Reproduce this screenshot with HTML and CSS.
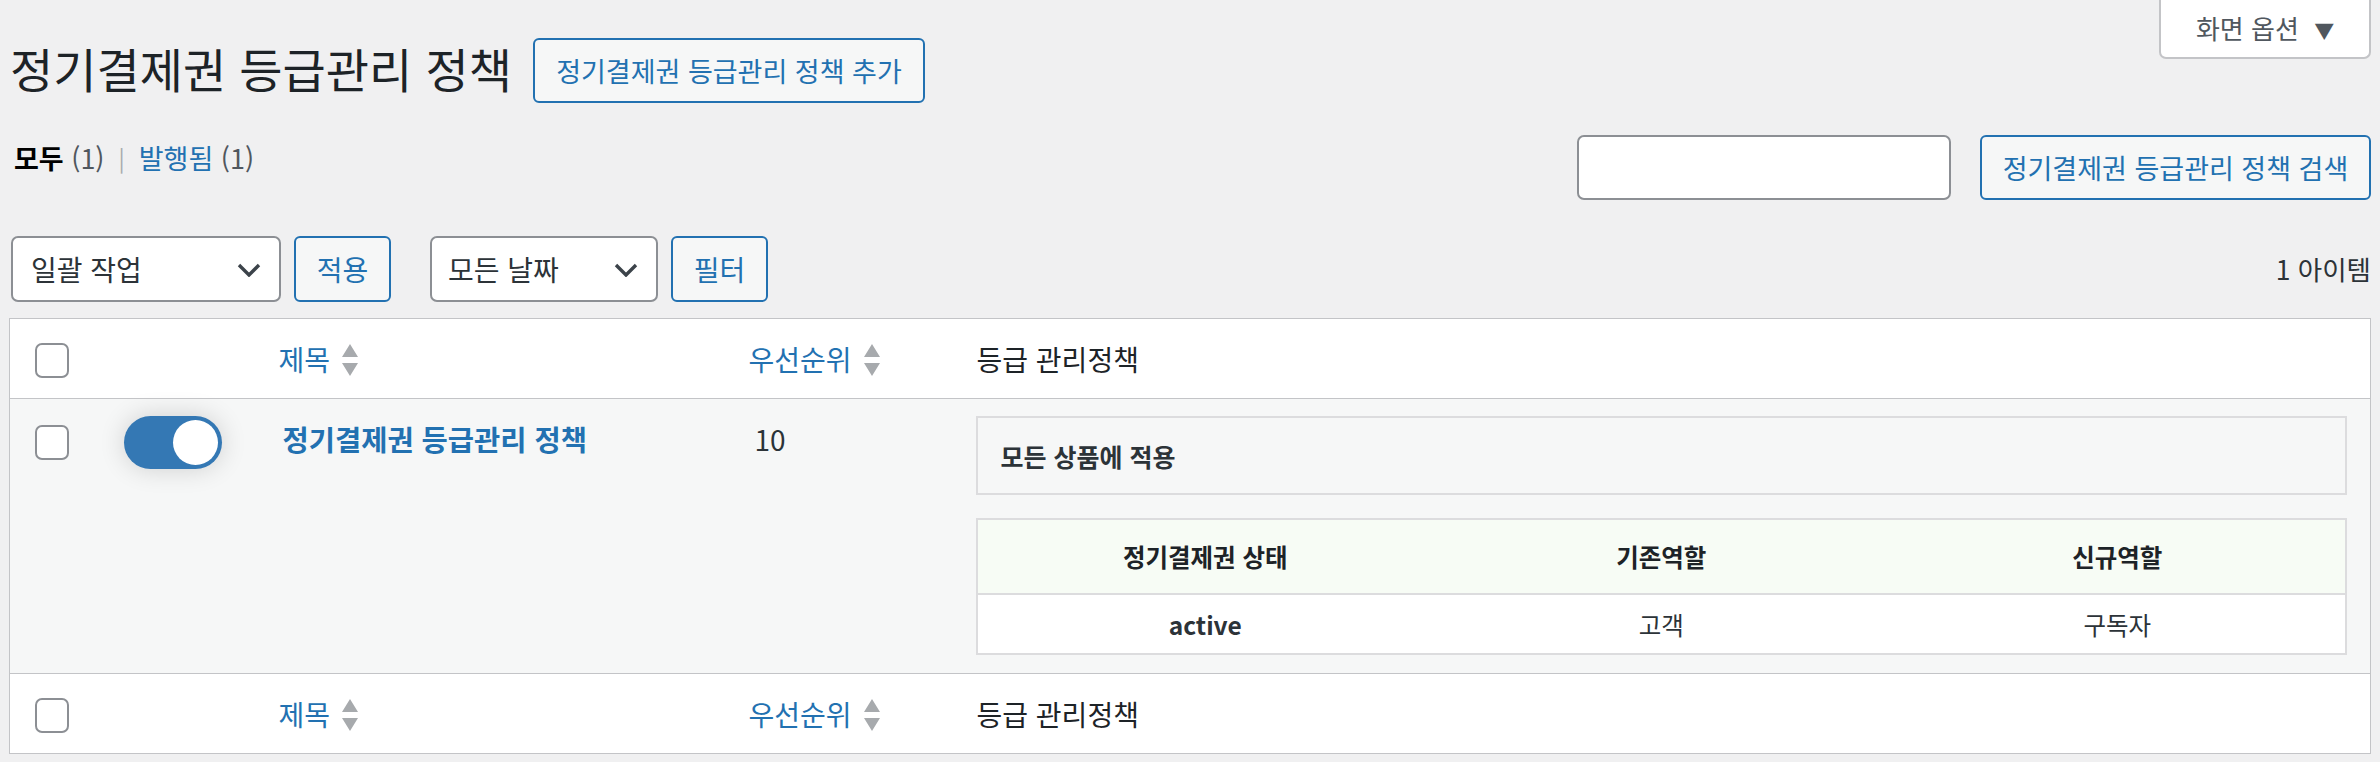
FILE: index.html
```html
<!DOCTYPE html>
<html lang="ko">
<head>
<meta charset="utf-8">
<title>정기결제권 등급관리 정책</title>
<link rel="stylesheet" href="styles.css">
</head>
<body>
<div class="wrap">
  <div class="top">
    <div class="heading">
      <h1 class="page-title">정기결제권 등급관리 정책</h1>
      <a class="btn btn-title" href="#">정기결제권 등급관리 정책 추가</a>
    </div>
    <button class="screen-options">화면 옵션 <span class="tri">▼</span></button>
  </div>

  <div class="filters-row">
    <ul class="subsubsub">
      <li class="current">모두 <span class="count">(1)</span></li>
      <li class="sep">|</li>
      <li><a href="#">발행됨</a> <span class="count">(1)</span></li>
    </ul>
    <div class="search-box">
      <input class="search-input" type="search" aria-label="검색">
      <a class="btn btn-search" href="#">정기결제권 등급관리 정책 검색</a>
    </div>
  </div>

  <div class="tablenav">
    <div class="actions">
      <div class="select select-bulk"><span>일괄 작업</span>
        <svg class="chev" viewBox="0 0 24 14" width="24" height="14"><path d="M2 2 L12 12 L22 2" fill="none" stroke="#3c434a" stroke-width="3.4"/></svg>
      </div>
      <a class="btn btn-small" href="#">적용</a>
      <div class="select select-date"><span>모든 날짜</span>
        <svg class="chev" viewBox="0 0 24 14" width="24" height="14"><path d="M2 2 L12 12 L22 2" fill="none" stroke="#3c434a" stroke-width="3.4"/></svg>
      </div>
      <a class="btn btn-small" href="#">필터</a>
    </div>
    <div class="items">1 아이템</div>
  </div>

  <table class="list">
    <colgroup>
      <col class="c-check"><col class="c-toggle"><col class="c-title"><col class="c-prio"><col>
    </colgroup>
    <thead>
      <tr class="head-row">
        <td class="cell-check"><span class="cb"></span></td>
        <td></td>
        <th class="cell-title"><a class="sort" href="#">제목<svg class="sort-ind" viewBox="0 0 18 34" width="18" height="34"><path d="M9 1 L17 14 L1 14 Z M1 20 L17 20 L9 33 Z" fill="#a7aaad"/></svg></a></th>
        <th class="cell-prio"><a class="sort" href="#">우선순위<svg class="sort-ind" viewBox="0 0 18 34" width="18" height="34"><path d="M9 1 L17 14 L1 14 Z M1 20 L17 20 L9 33 Z" fill="#a7aaad"/></svg></a></th>
        <th class="cell-grade">등급 관리정책</th>
      </tr>
    </thead>
    <tbody>
      <tr class="body-row">
        <td class="cell-check"><span class="cb"></span></td>
        <td class="cell-toggle"><span class="toggle"><span class="knob"></span></span></td>
        <td class="cell-title"><a class="row-title" href="#">정기결제권 등급관리 정책</a></td>
        <td class="cell-prio">10</td>
        <td class="cell-grade">
          <div class="scope-box">모든 상품에 적용</div>
          <table class="rules">
            <thead>
              <tr><th>정기결제권 상태</th><th>기존역할</th><th>신규역할</th></tr>
            </thead>
            <tbody>
              <tr><td class="strong">active</td><td>고객</td><td>구독자</td></tr>
            </tbody>
          </table>
        </td>
      </tr>
    </tbody>
    <tfoot>
      <tr class="head-row">
        <td class="cell-check"><span class="cb"></span></td>
        <td></td>
        <th class="cell-title"><a class="sort" href="#">제목<svg class="sort-ind" viewBox="0 0 18 34" width="18" height="34"><path d="M9 1 L17 14 L1 14 Z M1 20 L17 20 L9 33 Z" fill="#a7aaad"/></svg></a></th>
        <th class="cell-prio"><a class="sort" href="#">우선순위<svg class="sort-ind" viewBox="0 0 18 34" width="18" height="34"><path d="M9 1 L17 14 L1 14 Z M1 20 L17 20 L9 33 Z" fill="#a7aaad"/></svg></a></th>
        <th class="cell-grade">등급 관리정책</th>
      </tr>
    </tfoot>
  </table>
</div>
</body>
</html>
```
FILE: styles.css
```css
* { box-sizing: border-box; }
html, body { margin: 0; padding: 0; }
body {
  background: #f0f0f1;
  color: #3c434a;
  font-family: "Noto Sans CJK KR", "Noto Sans", sans-serif;
  font-size: 28px;
}
a { color: #2271b1; text-decoration: none; }

.wrap { padding: 0 9px; }

.top {
  display: flex;
  justify-content: space-between;
  align-items: flex-start;
  height: 135px;
}
.heading {
  display: flex;
  align-items: center;
  margin-top: 38px;
  padding-left: 1px;
  gap: 21px;
}
.page-title {
  margin: -5px 0 0;
  font-size: 47px;
  font-weight: 400;
  color: #1d2327;
  line-height: 60px;
  white-space: nowrap;
}
.btn {
  display: inline-flex;
  align-items: center;
  justify-content: center;
  height: 65px;
  border: 2px solid #2271b1;
  border-radius: 6px;
  background: #f6f7f7;
  color: #2271b1;
  font-size: 27px;
  white-space: nowrap;
}
.btn-title { padding: 0 22px; width: 392px; }
.btn-search { padding: 0 20px; width: 391px; }
.btn-small { height: 66px; width: 97px; font-size: 28px; }

.screen-options {
  width: 212px;
  height: 59px;
  margin-right: 0;
  background: #fff;
  border: 2px solid #c3c4c7;
  border-top: none;
  border-radius: 0 0 7px 7px;
  color: #50575e;
  font-family: inherit;
  font-size: 26px;
  padding: 0 0 3px;
}
.screen-options .tri { font-size: 20px; margin-left: 8px; }

.filters-row {
  display: flex;
  justify-content: space-between;
  align-items: flex-start;
  height: 65px;
}
.subsubsub {
  list-style: none;
  margin: 0;
  padding: 0 0 0 5px;
  display: flex;
  align-items: center;
  height: 44px;
  font-size: 27px;
  color: #646970;
}
.subsubsub li { white-space: nowrap; }
.subsubsub .current { color: #000; font-weight: 700; }
.subsubsub .current .count { font-weight: 400; }
.subsubsub .count { color: #50575e; }
.subsubsub .sep { margin: 0 14px; color: #a7aaad; font-size: 23px; }

.search-box { display: flex; gap: 29px; }
.search-input {
  width: 374px;
  height: 65px;
  border: 2px solid #8c8f94;
  border-radius: 7px;
  background: #fff;
  margin: 0;
}

.tablenav {
  margin-top: 36px;
  display: flex;
  justify-content: space-between;
  align-items: center;
  height: 66px;
}
.actions { display: flex; align-items: center; }
.select {
  height: 66px;
  border: 2px solid #8c8f94;
  border-radius: 7px;
  background: #fff;
  color: #2c3338;
  display: flex;
  align-items: center;
  justify-content: space-between;
  padding: 0 18px 0 18px;
  font-size: 28px;
}
.select-bulk { width: 270px; margin-left: 2px; }
.select-date { width: 228px; margin-left: 39px; padding-left: 16px; }
.btn-small { margin-left: 13px; }
.select .chev { flex: none; margin-top: 2px; }
.items { font-size: 26.5px; color: #2c3338; padding-bottom: 2px; }

.list {
  margin-top: 16px;
  width: 100%;
  table-layout: fixed;
  border-collapse: collapse;
  border: 1px solid #c3c4c7;
  background: #fff;
}
.c-check { width: 92px; }
.c-toggle { width: 164px; }
.c-title { width: 470px; }
.c-prio { width: 226px; }

.list th, .list td { padding: 0; text-align: left; font-weight: 400; }
.head-row { height: 80px; }
.head-row td, .head-row th { vertical-align: middle; }
.list thead .head-row { border-bottom: 1px solid #c3c4c7; }

.cb {
  display: block;
  width: 34px;
  height: 35px;
  border: 2px solid #8c8f94;
  border-radius: 7px;
  background: #fff;
}
.cell-check { padding-left: 25px !important; }
.head-row .cb { margin-top: 4px; }

.sort { display: inline-flex; align-items: center; font-size: 28px; color: #2271b1; }
.sort-ind { margin-left: 11px; margin-top: 2px; }
.list th.cell-title { padding-left: 13px; }
.list th.cell-prio { padding-left: 13px; }
.list th.cell-grade { padding-left: 15px; color: #1d2327; font-size: 28px; }

.body-row { background: #f6f7f7; border-bottom: 1px solid #c3c4c7; }
.body-row > td { vertical-align: top; }
.body-row > .cell-check { padding-top: 26px; }
.body-row > .cell-toggle { padding: 17px 0 0 22px; }
.toggle {
  display: flex;
  justify-content: flex-end;
  align-items: center;
  width: 98px;
  height: 53px;
  border-radius: 27px;
  background: #3478b4;
  padding-right: 4px;
  box-shadow: 0 0 26px rgba(0, 0, 0, 0.16);
}
.knob { width: 45px; height: 45px; border-radius: 50%; background: #fff; }
.body-row > .cell-title { padding: 20px 0 0 17px; }
.row-title { font-weight: 700; font-size: 28.5px; line-height: 40px; color: #2271b1; white-space: nowrap; }
.body-row > .cell-prio { padding: 20px 0 0 19px; line-height: 40px; font-size: 28px; color: #2c3338; }
.body-row > .cell-grade { padding: 17px 23px 18px 14px; }

.scope-box {
  height: 79px;
  border: 2px solid #dcdcde;
  background: #f6f7f7;
  display: flex;
  align-items: center;
  padding-left: 23px;
  font-size: 25px;
  font-weight: 700;
  color: #2c3338;
}
.rules {
  margin-top: 23px;
  width: 100%;
  table-layout: fixed;
  border-collapse: collapse;
  border: 2px solid #dcdcde;
  background: #fff;
}
.rules th, .rules td { text-align: center !important; font-size: 24.5px; color: #2c3338; }
.rules thead tr { background: #f7fcf5; height: 75px; border-bottom: 2px solid #dcdcde; }
.rules th { font-weight: 700 !important; color: #1d2327; }
.rules tbody tr { height: 60px; }
.rules td.strong { font-weight: 700; }
```
